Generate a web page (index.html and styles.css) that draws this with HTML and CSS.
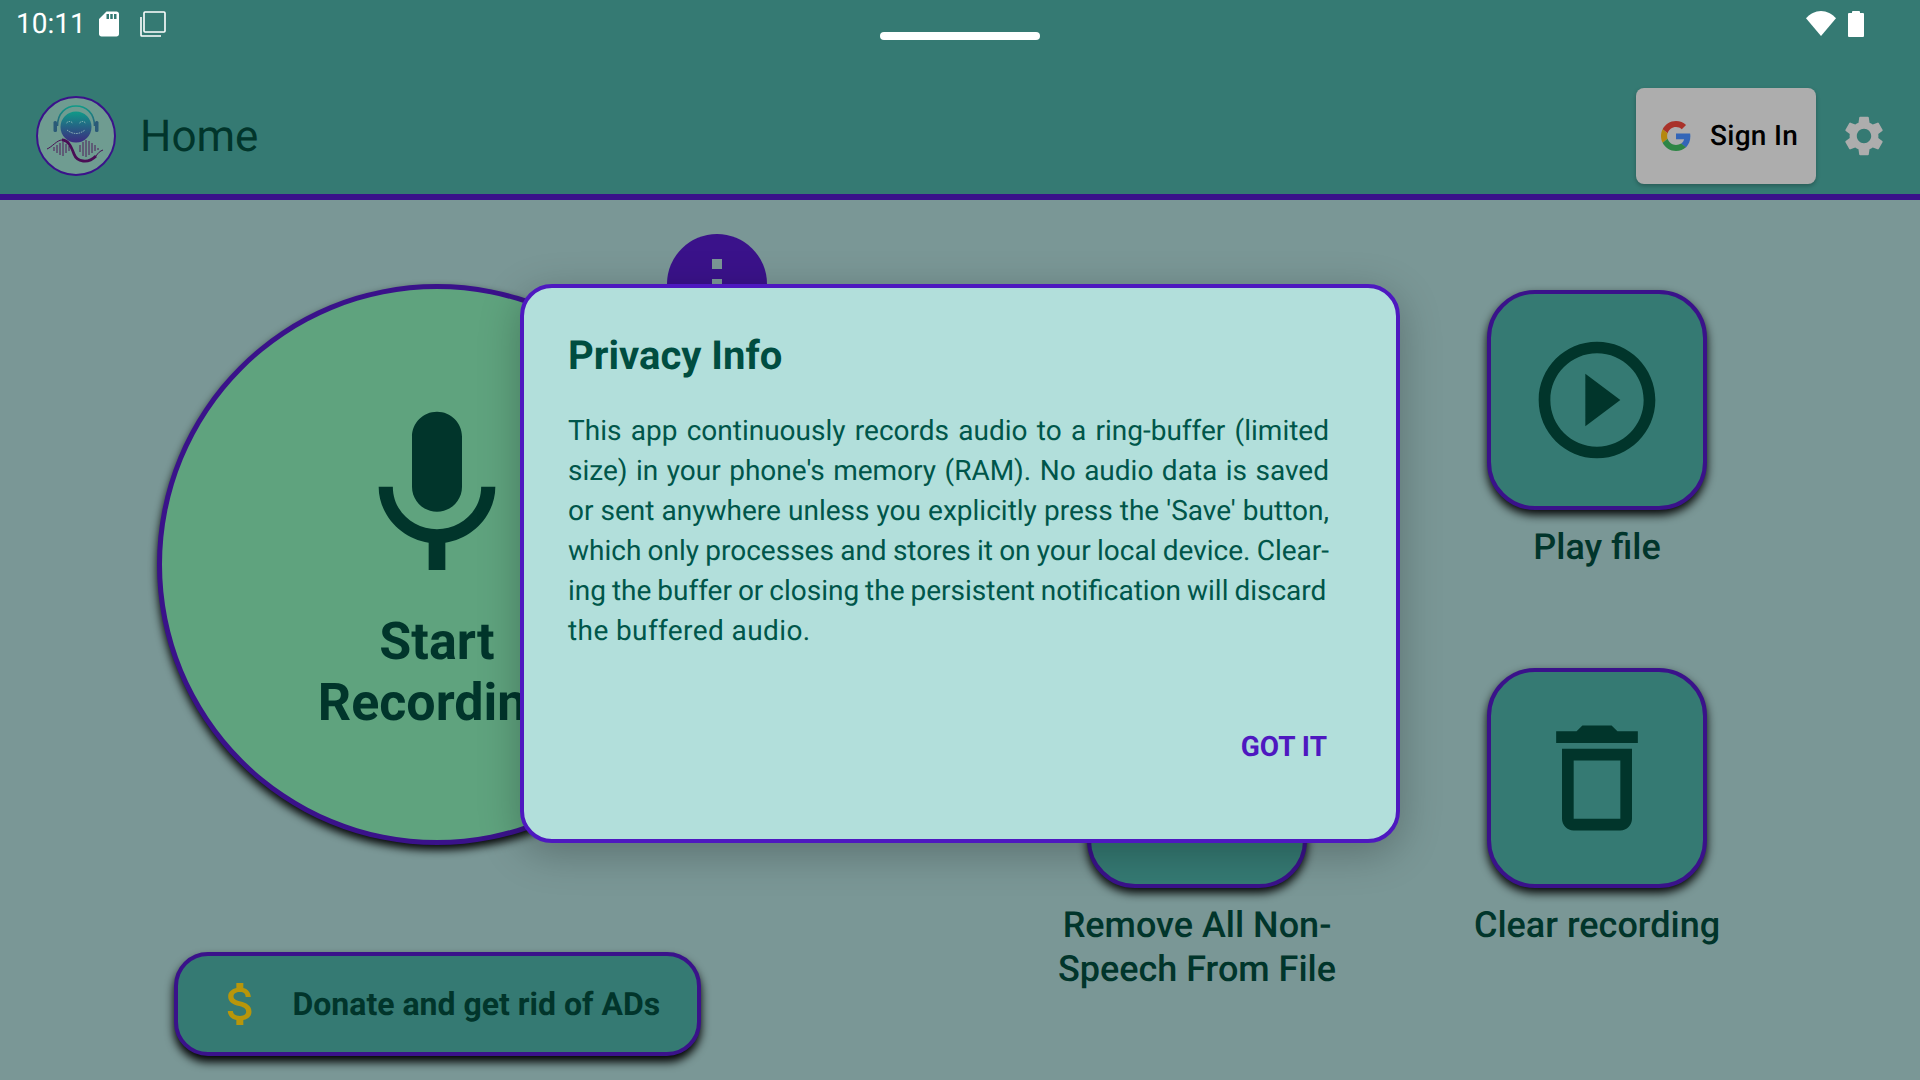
FILE: index.html
```html
<!DOCTYPE html>
<html lang="en">
<head>
<meta charset="utf-8">
<title>Home</title>
<link rel="stylesheet" href="styles.css">
</head>
<body>
<div class="screen">
  <header class="topbar">
    <div class="status">
      <div class="status-left">
        <span class="time">10:11</span>
        <svg class="sd" viewBox="0 0 24 24"><path fill="#fff" d="M18 2h-8L4 8v12c0 1.100.9 2 2 2h12c1.100 0 2-.9 2-2V4c0-1.100-.9-2-2-2zm-6 6h-2V4h2v4zm3 0h-2V4h2v4zm3 0h-2V4h2v4z"/></svg>
        <svg class="copy" viewBox="0 0 28 28"><rect x="5" y="2" width="21" height="20" rx="1" fill="none" stroke="#fff" stroke-width="1.600"/><path d="M2 7v18.200a.8.8 0 0 0 .8.8H22" fill="none" stroke="#fff" stroke-width="1.600"/></svg>
      </div>
      <div class="handle"></div>
      <div class="status-right">
        <svg class="wifi" viewBox="0 0 30 25"><path fill="#fff" d="M15 25 0 7.200C4 3 9.200 0 15 0s11 3 15 7.200z"/></svg>
        <svg class="battery" viewBox="0 0 16 26"><path fill="#fff" d="M4 2V1a1 1 0 0 1 1-1h6a1 1 0 0 1 1 1v1h3a1 1 0 0 1 1 1v22a1 1 0 0 1-1 1H1a1 1 0 0 1-1-1V3a1 1 0 0 1 1-1z"/></svg>
      </div>
    </div>
    <div class="appbar">
      <svg class="logo" viewBox="0 0 80 80">
        <defs>
          <linearGradient id="face" x1="0" y1="0" x2="0" y2="1"><stop offset="0" stop-color="#0f9a88"/><stop offset="1" stop-color="#3c2a80"/></linearGradient>
          <linearGradient id="band" x1="0" y1="0" x2="0" y2="1"><stop offset="0" stop-color="#0f9a88"/><stop offset="1" stop-color="#2a5a78"/></linearGradient>
        </defs>
        <circle cx="40" cy="40" r="39" fill="#6f9c91" stroke="#3a128a" stroke-width="2"/>
        <path d="M21.500 30C21.500 17 30 10 40 10s18.500 7 18.500 20" fill="none" stroke="url(#band)" stroke-width="1.600"/>
        <rect x="17.500" y="25" width="3.500" height="11" rx="1.500" fill="#2a5a78"/>
        <rect x="59" y="25" width="3.500" height="11" rx="1.500" fill="#2a5a78"/>
        <circle cx="40" cy="31" r="15.500" fill="url(#face)"/>
        <path d="M30.500 27q3-3 6 0M43.500 27q3-3 6 0M31 34q9 7 18 0" fill="none" stroke="#9fc4c0" stroke-width=".9" stroke-dasharray="1.500 1"/>
        <path d="M11 53C16 51 21 44 26 44M60 60C62 57 64 55 67 54" fill="none" stroke="#4a0d55" stroke-width="1"/>
        <path d="M26 44C32 44 35 50 38 58 41 66 52 68 60 60" fill="none" stroke="#4a0d55" stroke-width="2.800"/>
        <path d="M18 55v-4M21 57v-8M24 59v-12M27 60v-14M30 57v-9M33 55v-5M44 56v-7M47 60v-14M50 61v-17M53 59v-14M56 57v-10M59 55v-6M62 54v-2" fill="none" stroke="#4a0d55" stroke-width=".9"/>
      </svg>
      <h1 class="page-title">Home</h1>
      <button class="signin">
        <svg class="g-logo" viewBox="0 0 48 48">
          <path fill="#a9322a" d="M24 9.500c3.540 0 6.710 1.220 9.210 3.600l6.850-6.850C35.900 2.380 30.470 0 24 0 14.620 0 6.510 5.380 2.560 13.220l7.980 6.190C12.430 13.720 17.740 9.500 24 9.500z"/>
          <path fill="#3366b8" d="M46.980 24.550c0-1.570-.15-3.090-.38-4.550H24v9.020h12.940c-.58 2.960-2.260 5.480-4.780 7.180l7.730 6c4.510-4.180 7.090-10.360 7.090-17.650z"/>
          <path fill="#b5880f" d="M10.530 28.590c-.48-1.450-.76-2.990-.76-4.590s.27-3.140.76-4.590l-7.980-6.190C.92 16.460 0 20.120 0 24c0 3.880.92 7.540 2.560 10.780l7.970-6.190z"/>
          <path fill="#2e8545" d="M24 48c6.480 0 11.930-2.130 15.890-5.810l-7.730-6c-2.150 1.450-4.920 2.300-8.160 2.300-6.260 0-11.570-4.220-13.470-9.910l-7.980 6.190C6.510 42.620 14.620 48 24 48z"/>
        </svg>
        <span class="signin-text">Sign In</span>
      </button>
      <svg class="gear" viewBox="0 0 24 24"><path fill="#adadad" d="M19.140 12.940c.04-.3.06-.61.06-.94 0-.32-.02-.64-.07-.94l2.030-1.580a.49.49 0 0 0 .12-.61l-1.920-3.320a.488.488 0 0 0-.59-.22l-2.390.96c-.5-.38-1.030-.7-1.620-.94l-.36-2.540a.484.484 0 0 0-.48-.41h-3.840c-.24 0-.43.17-.47.41l-.36 2.540c-.59.24-1.130.57-1.620.94l-2.390-.96c-.22-.08-.47 0-.59.22L2.740 8.870c-.12.21-.08.47.12.61l2.030 1.580c-.05.3-.09.63-.09.94s.02.64.07.94l-2.030 1.580a.49.49 0 0 0-.12.61l1.920 3.320c.12.22.37.29.59.22l2.390-.96c.5.38 1.030.7 1.620.94l.36 2.540c.05.24.24.41.48.41h3.840c.24 0 .44-.17.47-.41l.36-2.540c.59-.24 1.130-.56 1.620-.94l2.390.96c.22.08.47 0 .59-.22l1.920-3.320c.12-.22.07-.47-.12-.61l-2.010-1.580zM12 15.600c-1.980 0-3.600-1.620-3.600-3.600s1.620-3.600 3.600-3.600 3.600 1.620 3.600 3.600-1.620 3.600-3.600 3.600z"/></svg>
    </div>
  </header>

  <main class="content">
    <section class="left">
      <button class="record">
        <svg class="mic" viewBox="0 0 24 24"><path fill="#01352b" d="M12 14c1.660 0 3-1.340 3-3V5c0-1.660-1.340-3-3-3S9 3.340 9 5v6c0 1.660 1.340 3 3 3zm5.300-3c0 3-2.540 5.100-5.300 5.100S6.700 14 6.700 11H5c0 3.410 2.720 6.230 6 6.720V21h2v-3.280c3.280-.48 6-3.300 6-6.720h-1.700z"/></svg>
        <span class="record-label">Start<br>Recording</span>
      </button>
      <div class="menu-dot"><i></i><i></i><i></i></div>
      <button class="donate">
        <svg class="dollar" viewBox="0 0 24 24"><path fill="#b8960a" d="M11.800 10.900c-2.270-.59-3-1.200-3-2.150 0-1.090 1.010-1.850 2.700-1.850 1.780 0 2.440.85 2.500 2.100h2.210c-.07-1.720-1.120-3.300-3.210-3.810V3h-3v2.160c-1.940.42-3.500 1.680-3.500 3.610 0 2.310 1.910 3.460 4.700 4.130 2.500.6 3 1.480 3 2.410 0 .69-.49 1.790-2.700 1.790-2.060 0-2.870-.92-2.980-2.100h-2.200c.12 2.190 1.760 3.500 3.680 3.910V21h3v-2.150c1.950-.37 3.500-1.500 3.500-3.550 0-2.840-2.430-3.810-4.700-4.400z"/></svg>
        <span>Donate and get rid of ADs</span>
      </button>
    </section>
    <section class="actions">
      <div class="action"><div class="tile"></div></div>
      <div class="action">
        <div class="tile"><svg class="tile-icon" viewBox="0 0 24 24"><path fill="#01352b" d="M10 16.500l6-4.500-6-4.500v9zM12 2C6.480 2 2 6.480 2 12s4.480 10 10 10 10-4.480 10-10S17.520 2 12 2zm0 18c-4.410 0-8-3.590-8-8s3.590-8 8-8 8 3.590 8 8-3.590 8-8 8z"/></svg></div>
        <p class="action-label">Play file</p>
      </div>
      <div class="action">
        <div class="tile"></div>
        <p class="action-label">Remove All Non-<br>Speech From File</p>
      </div>
      <div class="action">
        <div class="tile"><svg class="tile-icon" viewBox="0 0 24 24"><path fill="#01352b" d="M6 19c0 1.100.9 2 2 2h8c1.100 0 2-.9 2-2V7H6v12zM8 9h8v10H8V9zm7.500-5l-1-1h-5l-1 1H5v2h14V4h-3.500z"/></svg></div>
        <p class="action-label">Clear recording</p>
      </div>
    </section>
  </main>

  <div class="dialog" role="dialog">
    <h2 class="dialog-title">Privacy Info</h2>
    <div class="dialog-body">
      <span class="just">This app continuously records audio to a ring-buffer (limited</span>
      <span class="just">size) in your phone's memory (RAM). No audio data is saved</span>
      <span class="just">or sent anywhere unless you explicitly press the 'Save' button,</span>
      <span class="just tight-a">which only processes and stores it on your local device. Clear-</span>
      <span class="tight-b">ing the buffer or closing the persistent notification will discard</span>
      <span class="last">the buffered audio.</span>
    </div>
    <div class="dialog-actions"><span class="got-it">GOT IT</span></div>
  </div>
</div>
</body>
</html>
```
FILE: styles.css
```css
* { box-sizing: border-box; }
html, body { margin: 0; padding: 0; }
body { font-family: Roboto, "Liberation Sans", sans-serif; text-rendering: geometricPrecision; }
button { font-family: inherit; margin: 0; padding: 0; text-rendering: inherit; }

.screen {
  position: relative;
  width: 1920px;
  height: 1080px;
  overflow: hidden;
  background: #7a9796;
}

.topbar {
  height: 200px;
  background: #357a73;
  border-bottom: 6px solid #3a128a;
}

.status {
  display: grid;
  grid-template-columns: 864px 160px 1fr;
  height: 78px;
  padding: 0 56px 0 16px;
  color: #fff;
}
.status-left, .status-right { display: flex; align-items: center; height: 47px; }
.status-right { justify-content: flex-end; gap: 12px; }
.time { font-size: 28px; width: 67px; line-height: 47px; color: #fff; }
.sd { width: 30px; height: 30px; margin-left: 11px; }
.copy { width: 28px; height: 28px; margin-left: 15px; }
.handle { width: 160px; height: 8px; margin-top: 32px; border-radius: 4px; background: #fff; }
.wifi { width: 30px; height: 25px; }
.battery { width: 16px; height: 26px; }

.appbar {
  display: flex;
  align-items: center;
  height: 116px;
  padding: 0 32px 0 36px;
}
.logo { width: 80px; height: 80px; flex: none; }
.page-title {
  margin: 0 0 0 24px;
  font-size: 44px;
  font-weight: 400;
  color: #01352b;
}
.signin {
  display: flex;
  align-items: center;
  gap: 19px;
  width: 180px;
  height: 96px;
  margin-left: auto;
  padding-left: 25px;
  border: 0;
  border-radius: 8px;
  background: #adadad;
  box-shadow: 0 2px 4px rgba(0, 0, 0, .25);
  font-size: 28px;
  font-weight: 500;
  letter-spacing: .3px;
  color: #000;
}
.signin-text { margin-top: -2px; }
.g-logo { width: 30px; height: 30px; flex: none; }
.gear { width: 48px; height: 48px; margin-left: 24px; flex: none; }

.content {
  display: flex;
  height: 880px;
  padding-left: 157px;
}
.left {
  position: relative;
  display: flex;
  flex-direction: column;
  align-items: center;
  width: 560px;
  padding-top: 84px;
}
.record {
  display: flex;
  flex-direction: column;
  align-items: center;
  flex: none;
  width: 560px;
  height: 561px;
  padding-top: 106px;
  border: 5px solid #3a128a;
  border-radius: 50%;
  background: #5fa37e;
  box-shadow: 0 5px 9px rgba(0, 0, 0, .95);
}
.mic { width: 200px; height: 200px; flex: none; }
.record-label {
  margin-top: 16px;
  font-size: 52px;
  font-weight: 700;
  line-height: 61px;
  text-align: center;
  color: #01352b;
}
.menu-dot {
  position: absolute;
  left: 510px;
  top: 34px;
  display: flex;
  flex-direction: column;
  align-items: center;
  gap: 10px;
  width: 100px;
  height: 100px;
  padding-top: 25px;
  border-radius: 50%;
  background: #3a128a;
}
.menu-dot i { width: 10px; height: 10px; background: #7a9796; }
.donate {
  display: flex;
  align-items: center;
  flex: none;
  width: 527px;
  height: 104px;
  margin-top: 107px;
  padding-left: 35px;
  border: 4px solid #3a128a;
  border-radius: 34px;
  background: #357a73;
  box-shadow: 0 6px 10px rgba(0, 0, 0, 1);
  font-size: 32px;
  font-weight: 700;
  color: #01352b;
}
.dollar { width: 56px; height: 56px; flex: none; margin-right: 24px; }

.actions {
  display: grid;
  grid-template-columns: 400px 400px;
  grid-auto-rows: 378px;
  margin-left: 280px;
  padding-top: 90px;
}
.action { display: flex; flex-direction: column; align-items: center; }
.tile {
  display: flex;
  align-items: center;
  justify-content: center;
  flex: none;
  width: 220px;
  height: 220px;
  border: 4px solid #3a128a;
  border-radius: 48px;
  background: #357a73;
  box-shadow: 0 5px 10px rgba(0, 0, 0, .95);
}
.tile-icon { width: 140px; height: 140px; }
.action-label {
  margin: 15px 0 0;
  font-size: 36px;
  font-weight: 500;
  line-height: 44px;
  text-align: center;
  color: #01352b;
}

.dialog {
  position: absolute;
  left: 520px;
  top: 284px;
  display: flex;
  flex-direction: column;
  width: 880px;
  height: 559px;
  padding: 44px 67px 0 44px;
  border: 4px solid #4e18c0;
  border-radius: 32px;
  background: #b2dfdb;
  box-shadow: 0 10px 40px rgba(0, 0, 0, .25);
}
.dialog-title {
  margin: 0;
  font-size: 40px;
  font-weight: 700;
  line-height: 48px;
  color: #004d40;
}
.dialog-body {
  margin-top: 31px;
  font-size: 28px;
  line-height: 40px;
  color: #00564a;
}
.dialog-body span { display: block; white-space: nowrap; }
.dialog-body .just { text-align: justify; text-align-last: justify; }
.dialog-body .tight-a { word-spacing: -.8px; }
.dialog-body .tight-b { word-spacing: -1px; }
.dialog-body .last { letter-spacing: .4px; }
.dialog-actions { display: flex; justify-content: flex-end; margin-top: 76px; padding-right: 2px; }
.got-it {
  font-size: 28px;
  font-weight: 700;
  line-height: 40px;
  color: #4e18c0;
}
```
